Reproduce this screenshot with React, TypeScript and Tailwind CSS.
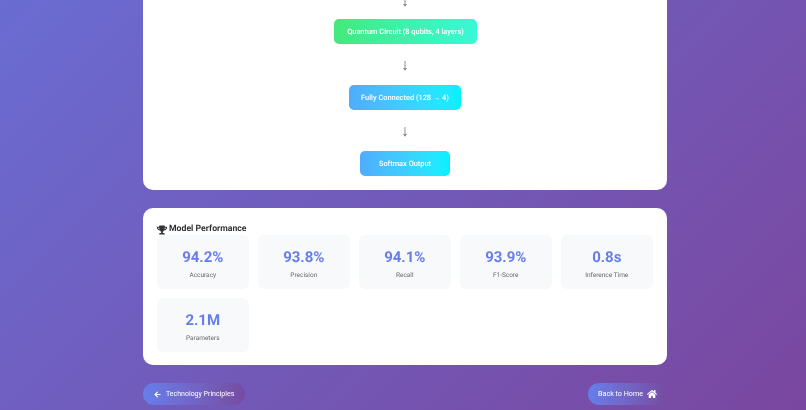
import { FaArrowLeft, FaHome, FaTrophy } from 'react-icons/fa';

const layers = [
  { label: 'Quantum Circuit (8 qubits, 4 layers)', color: 'w-[143px] from-[#43e97b] to-[#38f9d7]' },
  { label: 'Fully Connected (128 → 4)', color: 'w-[112px] from-[#4facfe] to-[#00f2fe]' },
  { label: 'Softmax Output', color: 'w-[90px] from-[#4facfe] to-[#00f2fe]' },
];

const metrics = [
  { value: '94.2%', label: 'Accuracy' },
  { value: '93.8%', label: 'Precision' },
  { value: '94.1%', label: 'Recall' },
  { value: '93.9%', label: 'F1-Score' },
  { value: '0.8s', label: 'Inference Time' },
  { value: '2.1M', label: 'Parameters' },
];

function Arrow({ className = '' }: { className?: string }) {
  return <div className={`h-[22px] text-center font-['Liberation_Sans',sans-serif] text-[16px] leading-[24px] text-[#666] [will-change:transform] ${className}`}>↓</div>;
}

export default function App() {
  return (
    <div className="h-screen overflow-hidden bg-[linear-gradient(135deg,#6a6cd2,#7a479f)] pl-[4px] font-['Roboto',sans-serif] [text-rendering:geometricPrecision]">
      <div className="mx-auto w-[524px]">
        {/* Architecture */}
        <div className="h-[190px] overflow-hidden rounded-b-[10px] bg-white">
          <div className="flex flex-col items-center pt-[19px]">
            <div className="-mt-[29px] mb-[7px]">
              <Arrow />
            </div>
            {layers.map((layer, i) => (
              <div key={layer.label} className="flex flex-col items-center">
                {i > 0 && <Arrow className="my-[9.5px]" />}
                <div
                  className={`flex h-[25px] items-center justify-center rounded-[5px] bg-gradient-to-r text-[7.4px] font-medium text-white [will-change:transform] ${layer.color}`}
                >
                  {layer.label}
                </div>
              </div>
            ))}
          </div>
        </div>

        {/* Model performance */}
        <div className="mt-[18px] h-[157px] rounded-[10px] bg-white p-[14px]">
          <h3 className="flex h-[14px] items-center gap-[2px] pt-[1px] text-[8.7px] font-bold text-[#333] [will-change:transform]">
            <FaTrophy className="text-[10px]" />
            Model Performance
          </h3>
          <div className="-mt-[1px] grid grid-cols-5 gap-[9.6px]">
            {metrics.map((m) => (
              <div key={m.label} className="flex h-[53.5px] flex-col items-center rounded-[6px] bg-[#f8f9fa] pt-[11px] [will-change:transform]">
                <div className="text-[15px] leading-[22px] font-bold text-[#667eea]">{m.value}</div>
                <div className="mt-[2px] text-[6.5px] leading-[10px] text-[#666]">{m.label}</div>
              </div>
            ))}
          </div>
        </div>

        {/* Nav */}
        <div className="mt-[18px] flex justify-between">
          <button className="flex h-[22px] items-center gap-[5px] rounded-full bg-gradient-to-r from-[#667eea] to-[#764ba2] px-[11px] text-[7px] text-white [will-change:transform]">
            <FaArrowLeft className="text-[7px]" />
            Technology Principles
          </button>
          <button className="flex h-[22px] items-center gap-[4px] rounded-full bg-gradient-to-r from-[#667eea] to-[#764ba2] px-[10px] text-[7.2px] text-white [will-change:transform]">
            Back to Home
            <FaHome className="text-[10px]" />
          </button>
        </div>
      </div>
    </div>
  );
}
